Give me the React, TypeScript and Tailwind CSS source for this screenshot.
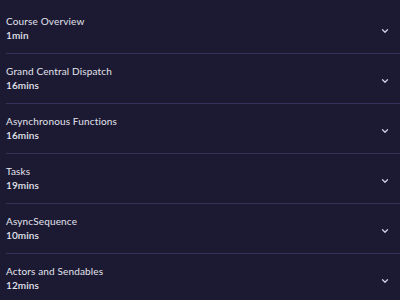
import { ChevronDown } from "lucide-react";

const lessons = [
  { title: "Course Overview", duration: "1min" },
  { title: "Grand Central Dispatch", duration: "16mins" },
  { title: "Asynchronous Functions", duration: "16mins" },
  { title: "Tasks", duration: "19mins" },
  { title: "AsyncSequence", duration: "10mins" },
  { title: "Actors and Sendables", duration: "12mins" },
];

function App() {
  return (
    <div className="w-[400px] h-[300px] overflow-hidden bg-[#1b1a32] pt-[4px] font-['Lato',sans-serif]">
      {lessons.map((item) => (
        <div key={item.title} className="ml-[6px] h-[50px] border-b border-[#33325a] flex items-center justify-between pr-[10px]">
          <div className="flex flex-col">
            <p className="text-[10px] leading-[14px] tracking-[0.15px] text-[#e4e4ee]">{item.title}</p>
            <p className="text-[10px] leading-[15px] font-semibold tracking-[0.1px] text-[#e4e4ee]">{item.duration}</p>
          </div>
          <ChevronDown className="w-[10px] h-[10px] mt-[4px] text-[#cfcfe6]" strokeWidth={3} />
        </div>
      ))}
    </div>
  );
}

export default App;
